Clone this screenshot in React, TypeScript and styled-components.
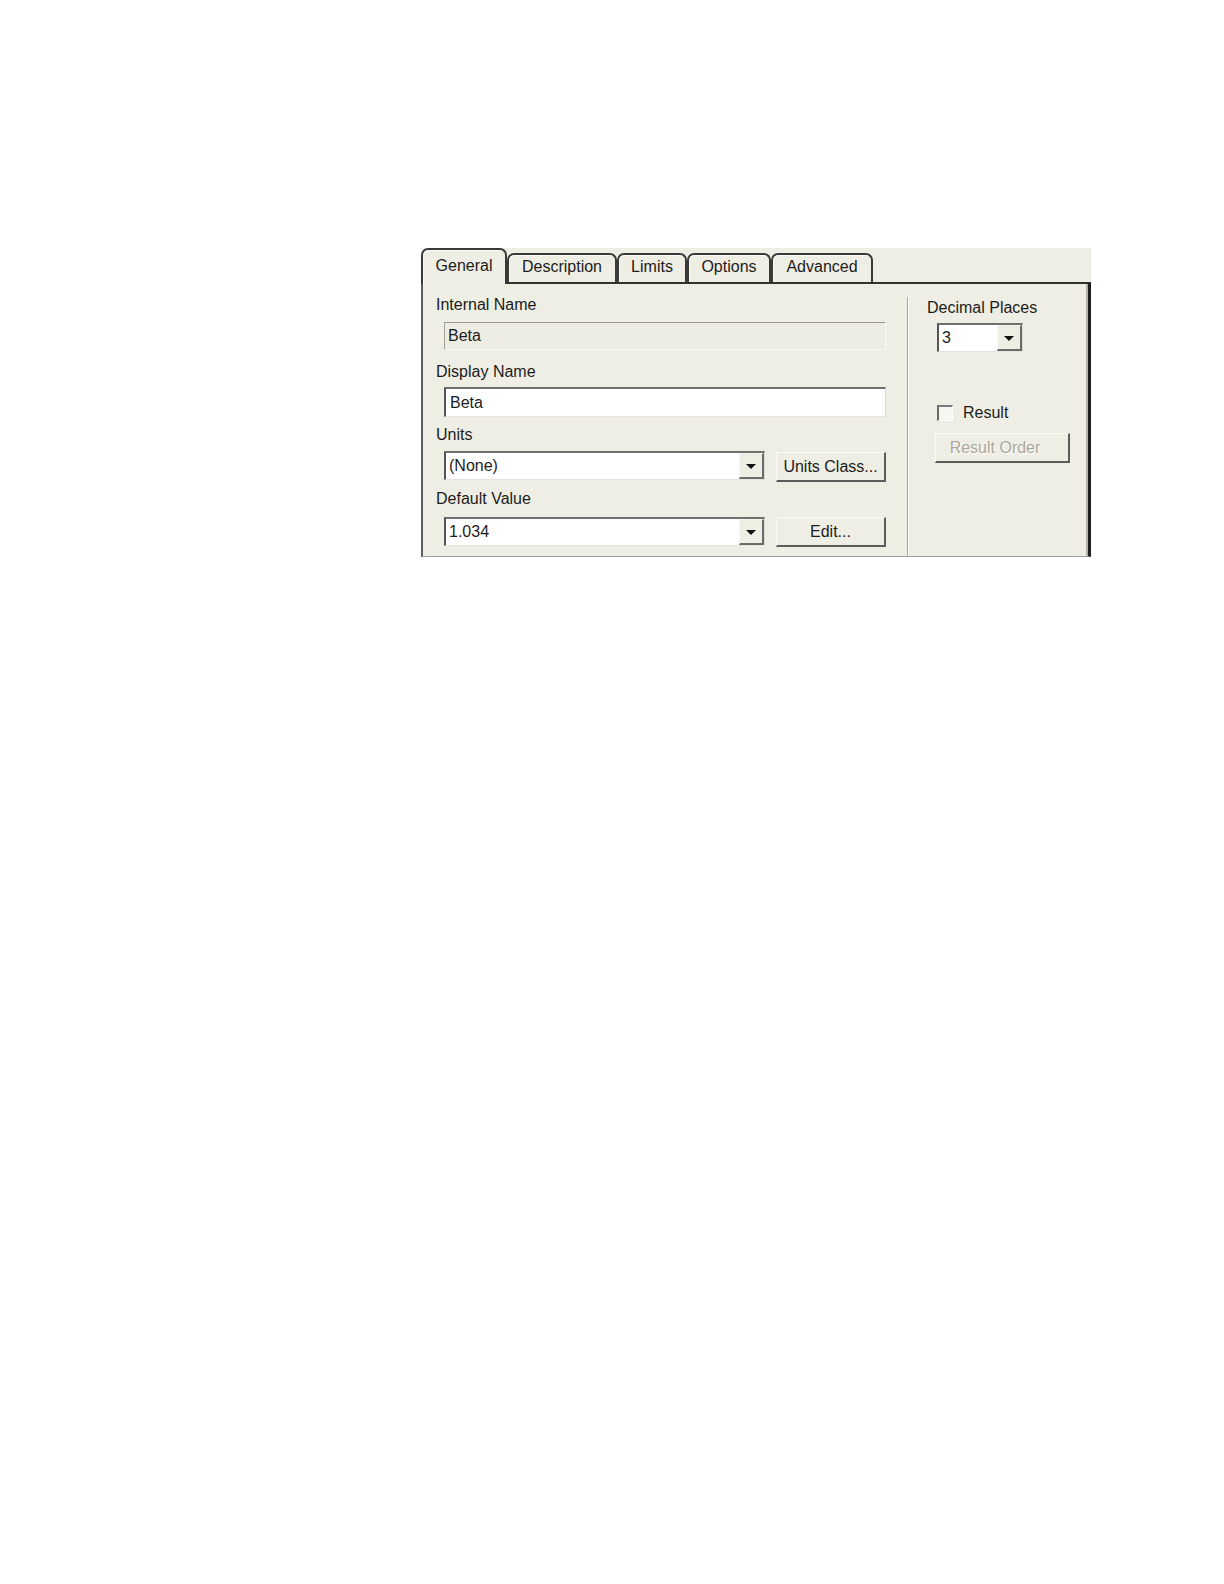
import React from "react"
import styled, { createGlobalStyle } from "styled-components"

const GlobalStyle = createGlobalStyle`
  html, body {
    margin: 0;
    padding: 0;
    background: #ffffff;
  }
  body {
    font-family: "Liberation Sans", Arial, sans-serif;
    font-size: 16px;
    color: #1c1c1c;
  }
`

const BEIGE = "#efeee4"

const Page = styled.div`
  padding: 248px 0 0 421px;
  min-height: 1336px;
`

const Dialog = styled.div`
  width: 670px;
  background: ${BEIGE};
`

const TabStrip = styled.div`
  display: flex;
  align-items: flex-end;
  height: 34px;
`

const Tab = styled.div<{ $active?: boolean; $w: number }>`
  position: relative;
  box-sizing: border-box;
  width: ${(p) => p.$w}px;
  height: ${(p) => (p.$active ? 36 : 29)}px;
  margin-bottom: ${(p) => (p.$active ? -2 : 0)}px;
  z-index: ${(p) => (p.$active ? 2 : 1)};
  padding-top: ${(p) => (p.$active ? 6 : 2)}px;
  border: 2px solid #3a3a3a;
  border-bottom: none;
  border-radius: 7px 7px 0 0;
  background: ${BEIGE};
  box-shadow: inset 1px 1px 0 #fbfaf6;
  text-align: center;
  line-height: 20px;
  white-space: nowrap;
`

const Panel = styled.div`
  display: flex;
  box-sizing: border-box;
  height: 275px;
  border-top: 2px solid #333333;
  border-left: 2px solid #5e5e5e;
  border-right: 3px solid #1f1f1f;
  border-bottom: 1px solid #9d9b92;
  box-shadow: inset -2px 0 0 #b3b1a7;
`

const LeftCol = styled.div`
  box-sizing: border-box;
  width: 484px;
  padding: 11px 21px 0 13px;
  display: flex;
  flex-direction: column;
`

const RightCol = styled.div`
  flex: 1;
  margin-top: 13px;
  padding: 1px 0 0 19px;
  border-left: 1px solid #aaa89d;
  box-shadow: inset 1px 0 0 #ffffff;
  display: flex;
  flex-direction: column;
  align-items: flex-start;
`

const Label = styled.div<{ $top?: number }>`
  line-height: 20px;
  height: 20px;
  margin-top: ${(p) => p.$top ?? 0}px;
  white-space: nowrap;
`

const TextField = styled.div<{ $top: number; $h: number; $disabled?: boolean }>`
  box-sizing: border-box;
  margin: ${(p) => p.$top}px 0 0 8px;
  height: ${(p) => p.$h}px;
  padding-left: ${(p) => (p.$disabled ? 3 : 4)}px;
  display: flex;
  align-items: center;
  background: ${(p) => (p.$disabled ? "#edece2" : "#ffffff")};
  border-top: ${(p) => (p.$disabled ? "1px solid #9c9a90" : "2px solid #707070")};
  border-left: ${(p) => (p.$disabled ? "1px solid #a3a196" : "2px solid #555555")};
  border-right: 1px solid ${(p) => (p.$disabled ? "#fbfaf5" : "#dedcd2")};
  border-bottom: 1px solid ${(p) => (p.$disabled ? "#fbfaf5" : "#e6e4da")};
`

const FieldRow = styled.div<{ $top: number }>`
  display: flex;
  align-items: flex-start;
  gap: 11px;
  margin: ${(p) => p.$top}px 0 0 8px;
`

const Combo = styled.div<{ $w: number; $top?: number; $left?: number }>`
  box-sizing: border-box;
  width: ${(p) => p.$w}px;
  height: 29px;
  margin: ${(p) => p.$top ?? 0}px 0 0 ${(p) => p.$left ?? 0}px;
  display: flex;
  align-items: stretch;
  background: #ffffff;
  border-top: 2px solid #707070;
  border-left: 2px solid #555555;
  border-right: 1px solid #dedcd2;
  border-bottom: 1px solid #e6e4da;
`

const ComboText = styled.div`
  flex: 1;
  display: flex;
  align-items: center;
  padding-left: 3px;
`

const ArrowButton = styled.div`
  box-sizing: border-box;
  width: 25px;
  display: flex;
  align-items: center;
  justify-content: center;
  background: ${BEIGE};
  border-top: 1px solid #f7f6f1;
  border-left: 1px solid #f7f6f1;
  border-right: 2px solid #6a6a6a;
  border-bottom: 2px solid #6a6a6a;

  &::after {
    content: "";
    border-left: 5px solid transparent;
    border-right: 5px solid transparent;
    border-top: 5px solid #111111;
    margin-top: 1px;
  }
`

const Button = styled.div<{ $w: number; $top?: number; $left?: number; $disabled?: boolean }>`
  box-sizing: border-box;
  width: ${(p) => p.$w}px;
  height: 30px;
  margin: ${(p) => p.$top ?? 0}px 0 0 ${(p) => p.$left ?? 0}px;
  padding-right: ${(p) => (p.$disabled ? 14 : 0)}px;
  display: flex;
  align-items: center;
  justify-content: center;
  background: ${BEIGE};
  border-top: 1px solid #fbfaf6;
  border-left: 1px solid #fbfaf6;
  border-right: 2px solid #5c5c5c;
  border-bottom: 2px solid #5c5c5c;
  color: ${(p) => (p.$disabled ? "#a9a79c" : "#1c1c1c")};
  text-shadow: ${(p) => (p.$disabled ? "1px 1px 0 #ffffff" : "none")};
  white-space: nowrap;
`

const CheckRow = styled.label`
  display: flex;
  align-items: center;
  gap: 10px;
  height: 20px;
  margin: 51px 0 0 10px;
`

const CheckBox = styled.span`
  box-sizing: border-box;
  width: 16px;
  height: 16px;
  background: #f7f6f0;
  border-top: 2px solid #7a7a7a;
  border-left: 2px solid #6a6a6a;
  border-right: 1px solid #ffffff;
  border-bottom: 1px solid #ffffff;
`

const tabs = [
  { name: "General", w: 86 },
  { name: "Description", w: 110 },
  { name: "Limits", w: 70 },
  { name: "Options", w: 84 },
  { name: "Advanced", w: 102 },
]

const App = () => {
  return (
    <Page>
      <GlobalStyle />
      <Dialog>
        <TabStrip>
          {tabs.map((t, i) => (
            <Tab key={t.name} $w={t.w} $active={i === 0}>
              {t.name}
            </Tab>
          ))}
        </TabStrip>
        <Panel>
          <LeftCol>
            <Label>Internal Name</Label>
            <TextField $top={7} $h={28} $disabled>
              Beta
            </TextField>
            <Label $top={12}>Display Name</Label>
            <TextField $top={5} $h={30}>
              Beta
            </TextField>
            <Label $top={8}>Units</Label>
            <FieldRow $top={6}>
              <Combo $w={321}>
                <ComboText>(None)</ComboText>
                <ArrowButton />
              </Combo>
              <Button $w={110} $top={1}>
                Units Class...
              </Button>
            </FieldRow>
            <Label $top={7}>Default Value</Label>
            <FieldRow $top={8}>
              <Combo $w={321}>
                <ComboText>1.034</ComboText>
                <ArrowButton />
              </Combo>
              <Button $w={110}>Edit...</Button>
            </FieldRow>
          </LeftCol>
          <RightCol>
            <Label>Decimal Places</Label>
            <Combo $w={86} $top={5} $left={10}>
              <ComboText>3</ComboText>
              <ArrowButton />
            </Combo>
            <CheckRow>
              <CheckBox />
              Result
            </CheckRow>
            <Button $w={135} $top={10} $left={8} $disabled>
              Result Order
            </Button>
          </RightCol>
        </Panel>
      </Dialog>
    </Page>
  )
}

export default App
